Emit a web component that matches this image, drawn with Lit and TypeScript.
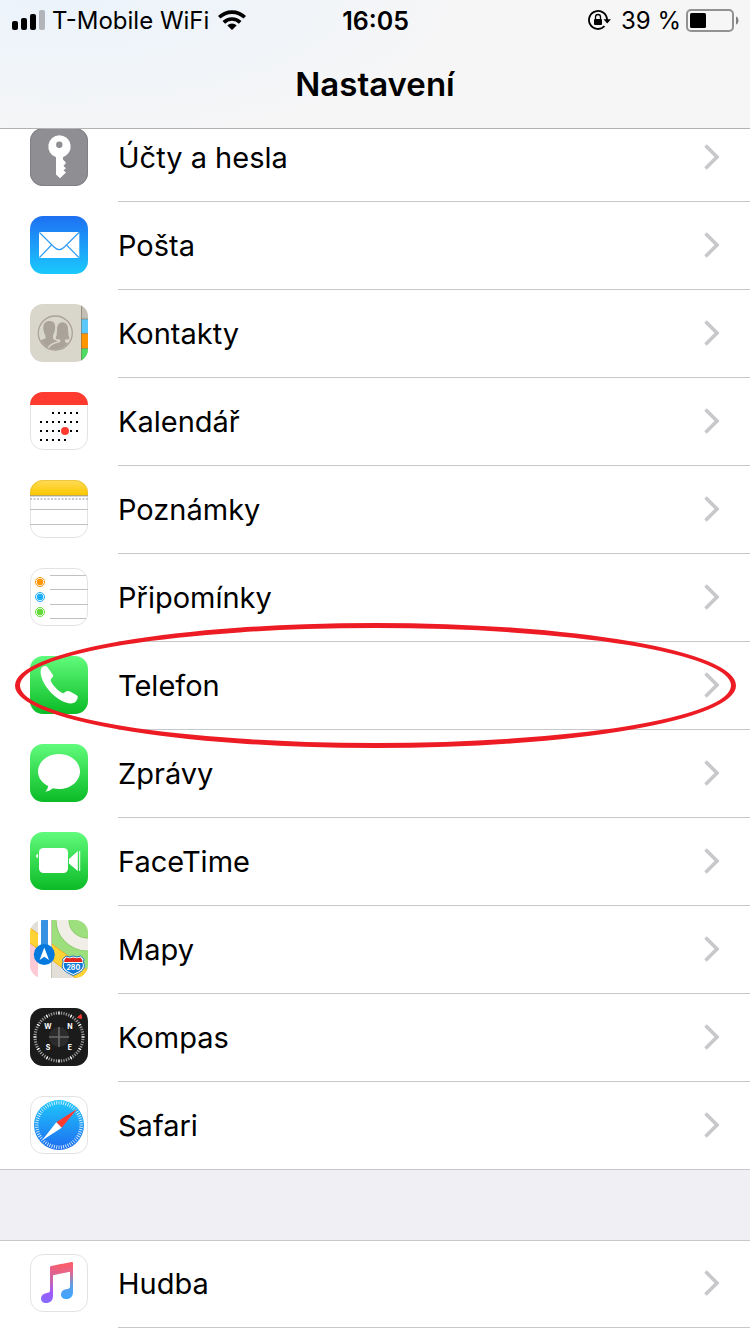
import { LitElement, html, svg, css, nothing, SVGTemplateResult } from "lit";
import { customElement, property } from "lit/decorators.js";

const outline = svg`<rect x="0.5" y="0.5" width="57" height="57" rx="12.5" fill="none" stroke="#e3e3e5"/>`;

const greenTile = svg`
  <defs><linearGradient id="green" x1="0" y1="0" x2="0" y2="1">
    <stop offset="0" stop-color="#61fb7c"/><stop offset="1" stop-color="#0abb26"/>
  </linearGradient></defs>
  <rect width="58" height="58" rx="13" fill="url(#green)"/>`;

const tileClip = svg`<clipPath id="tile"><rect width="58" height="58" rx="13"/></clipPath>`;

/** Tick marks around the centre of a 58px tile. */
function ticks(count: number, inner: number, outer: number, color: string, width: number) {
  return Array.from({ length: count }, (_, i) => svg`
    <line x1="29" x2="29" y1=${29 - outer} y2=${29 - inner} stroke=${color} stroke-width=${width}
      transform=${`rotate(${(i * 360) / count} 29 29)`}/>`);
}

function calendarDots() {
  const rows: Array<[number, number, number]> = [[20, 2, 6], [29, 0, 6], [38, 0, 6], [47, 0, 4]];
  return rows.map(([y, from, to]) =>
    Array.from({ length: to - from + 1 }, (_, i) => svg`
      <rect x=${10 + (from + i) * 6} y=${y} width="2" height="2" fill="#000"/>`));
}

const icons: Record<string, SVGTemplateResult> = {
  key: svg`
    <rect width="58" height="58" rx="13" fill="#8e8e93"/>
    <rect x="0.5" y="0.5" width="57" height="57" rx="12.5" fill="none" stroke="#808085"/>
    <path fill="#fff" fill-rule="evenodd" d="M29.3 7.2a11.3 11.3 0 0 1 3.7 22V31.5L36 34.8 33.5 38 36 40.3 33.5 42.2 36 44.6 30 50.2 26 46.5V29.2A11.3 11.3 0 0 1 29.3 7.2ZM29.3 13.6a3.2 3.2 0 1 0 0 6.4 3.2 3.2 0 0 0 0-6.4Z"/>`,
  mail: svg`
    <defs><linearGradient id="sky" x1="0" y1="0" x2="0" y2="1">
      <stop offset="0" stop-color="#1e70f2"/><stop offset="1" stop-color="#1ac9fd"/>
    </linearGradient></defs>
    <rect width="58" height="58" rx="13" fill="url(#sky)"/>
    <rect x="9" y="16" width="40.3" height="26" rx="1" fill="#fff"/>
    <g fill="none" stroke="#2f9df7" stroke-width="1.2">
      <path d="M9.5 16.5 24 31q5.2 5.2 10.4 0L49 16.5"/>
      <path d="M9.5 41.5 21.5 29M48.8 41.5 36.5 29"/>
    </g>`,
  contacts: svg`
    ${tileClip}
    <g clip-path="url(#tile)">
      <rect width="58" height="58" fill="#d9d6cc"/>
      <rect x="51" width="7" height="15" fill="#c2beb4"/>
      <rect x="51" y="15" width="7" height="14.5" fill="#5ac8fa"/>
      <rect x="51" y="29.5" width="7" height="15" fill="#ff9500"/>
      <rect x="51" y="44.5" width="7" height="14" fill="#4cd964"/>
      <path d="M51 15h7M51 29.5h7M51 44.5h7M51.5 0v58" stroke="#7d6a50" stroke-opacity=".55"/>
    </g>
    <clipPath id="people"><circle cx="25.3" cy="29" r="16.2"/></clipPath>
    <circle cx="25.3" cy="29" r="17" fill="none" stroke="#aaa39a" stroke-width="1.3"/>
    <g clip-path="url(#people)" fill="#aaa39a">
      <path d="M19.5 17c4 0 6 2.5 5.600 7-.1 4-1.300 5.500-2.100 7.500v3.500l5 2v12H6V38l9.500-3.500v-3c-1.200-2-2.200-4-2.200-7.500 0-4.500 2.200-7 6.200-7Z"/>
      <path stroke="#d9d6cc" stroke-width="1.500" d="M32.500 17.500c5 0 6.300 4 6.300 8.500 0 4 .4 6.500 1.500 9-1.300 1-3 1.200-4.600 1.200v1.300l8.300 3.500V50H18.500v-6c.8-3.500 5-5 11-6.500v-1.300c-1.700 0-3.500-.2-4.700-1.200 1.200-2.500 1.500-5 1.500-9 0-4.500 1.200-8.500 6.200-8.500Z"/>
    </g>`,
  calendar: svg`
    ${tileClip}
    <rect width="58" height="58" rx="13" fill="#fff"/>${outline}
    <g clip-path="url(#tile)"><rect width="58" height="13" fill="#ff3b30"/></g>
    ${calendarDots()}
    <circle cx="35" cy="39" r="4" fill="#ff3b30"/>`,
  notes: svg`
    ${tileClip}
    <defs><linearGradient id="gold" x1="0" y1="0" x2="0" y2="1">
      <stop offset="0" stop-color="#ffdc5a"/><stop offset="1" stop-color="#fdc800"/>
    </linearGradient></defs>
    <rect width="58" height="58" rx="13" fill="#fff"/>${outline}
    <g clip-path="url(#tile)">
      <rect width="58" height="15" fill="url(#gold)"/>
      <path d="M0 15.5h58" stroke="#b9a56a"/><path d="M0 16.5h58" stroke="#d8d8dc"/>
      <path d="M0 19h58" stroke="#c9c9cc" stroke-width="2" stroke-dasharray="2 1.5"/>
      <path d="M0 29.5h58M0 44.5h58" stroke="#c2c2c6"/>
    </g>
    <path d="M.5 15V13A12.5 12.5 0 0 1 13 .5H45A12.5 12.5 0 0 1 57.5 13V15" fill="none" stroke="#e5bd35" stroke-opacity=".7"/>`,
  reminders: svg`
    <rect width="58" height="58" rx="13" fill="#fff"/>${outline}
    <path d="M20 7.5h36M20 21.5h38M20 36.5h38M20 50.5h36" stroke="#c0c0c5"/>
    ${[["#ff9500", 14], ["#1badf8", 29], ["#63da38", 44]].map(([color, y]) => svg`
      <circle cx="10" cy=${y} r="4.5" fill="none" stroke=${color} stroke-width="1"/>
      <circle cx="10" cy=${y} r="3.2" fill=${color}/>`)}`,
  phone: svg`${greenTile}
    <path fill="#fff" d="M11.3 12.2C13 10.3 15.5 9.5 16.7 10.5c2 2 4.3 5.5 6.3 8.5 1 1.7-2.5 3.5-2.3 5.5.8 3.500 8 11.300 11.800 12.600 2 .6 3.500-2.600 5.700-2 3 1 6.300 2.700 9 4.600 1.500 1.300-.2 4.800-2 6.300-2.500 2-6 1.500-9.200.5C24.5 43.2 12 28.5 10.7 17.5c-.2-2 0-4 .6-5.300Z"/>`,
  messages: svg`${greenTile}
    <path fill="#fff" d="M29 10c11.6 0 21 7.8 21 17.500S40.600 45 29 45c-2.200 0-4.300-.2-6.200-.8-2.200 2-4.900 3.200-7.500 3.500 1.600-1.500 2.700-3.500 2.800-5.700C11.800 38.800 8 33.500 8 27.500 8 17.800 17.400 10 29 10Z"/>`,
  facetime: svg`${greenTile}
    <rect x="9" y="16" width="29" height="25" rx="4.5" fill="#fff"/>
    <path fill="#fff" d="M39 27 47.8 19V39L39 31.5ZM49.2 19H50.2V39H49.2ZM8 22v4c-2.5-.5-2.5-3.5 0-4Z"/>`,
  maps: svg`
    ${tileClip}
    <g clip-path="url(#tile)">
      <rect width="58" height="58" fill="#e2dfd8"/>
      <path d="M0 20 8 26V58H0Z" fill="#ffcad6"/>
      <path d="M21 0H58V50L21 24Z" fill="#9ddf7c"/>
      <circle cx="57" cy="0" r="24.5" fill="none" stroke="#84c864" stroke-width="13.5"/>
      <circle cx="57" cy="0" r="24.5" fill="none" stroke="#f1eee7" stroke-width="12"/>
      <path d="M-4 5-4 20 52 63 64 55Z" fill="#ffd335" stroke="#efb321" stroke-width="1"/>
      <path d="M8 0H21V58H8Z" fill="#fff"/><path d="M21.5 0V58" stroke="#c7c3b6"/>
      <path d="M11 0H18V36H11Z" fill="#3693e3"/>
    </g>
    <circle cx="14.3" cy="34.5" r="10.5" fill="#0579dd"/>
    <path d="M14.3 27.5 19 40 14.3 36.8 9.6 40Z" fill="#fff"/>
    <path d="M36 36q3.500 2 7.300 0 3.800 2 7.300 0l3.500 3.300q-1.500 2.200.2 5.200c1 6-5.500 8.500-11 11-5.500-2.500-12-5-11-11q1.700-3 .2-5.200Z" fill="#fff" stroke="#1275c9" stroke-width="1"/>
    <path d="M36.3 37.5q3.500 1.500 7 0 3.500 1.500 7 0l2 2.500v2H34.3v-2Z" fill="#e0271f"/>
    <path d="M34 43H52.6c1.500 6-3.300 8.300-9.300 11-6-2.700-10.800-5-9.300-11Z" fill="#0b79d6"/>
    <text x="43.3" y="49.5" text-anchor="middle" class="tiny">280</text>`,
  compass: svg`
    <rect width="58" height="58" rx="13" fill="#1b1b1b"/>
    ${ticks(60, 22.5, 25.5, "#9a9a9a", 1.2)}${ticks(12, 22.5, 25.5, "#fff", 1.2)}
    <circle cx="29" cy="29" r="10" fill="#2b2b2b"/>
    <path d="M29 19V39M19 29H39" stroke="#6a6a6a" stroke-width="1.6"/>
    <path d="M47.5 9.500 51 6.500 51.500 10.500Z" fill="#ff3b30" stroke="#ff3b30" stroke-linejoin="round"/>
    <g class="tiny"><text x="18" y="21" text-anchor="middle">W</text><text x="40" y="21" text-anchor="middle">N</text>
    <text x="18" y="42" text-anchor="middle">S</text><text x="40" y="42" text-anchor="middle">E</text></g>`,
  safari: svg`
    <defs><linearGradient id="azure" x1="0" y1="0" x2="0" y2="1">
      <stop offset="0" stop-color="#1ec8fa"/><stop offset="1" stop-color="#1e6cf1"/>
    </linearGradient></defs>
    <rect width="58" height="58" rx="13" fill="#fff"/>${outline}
    <circle cx="29" cy="29" r="25" fill="url(#azure)"/>
    ${ticks(60, 20.5, 24, "#d3ecff", 0.9)}
    <path d="M47 13 31.7 31.7 26.3 26.3Z" fill="#ff3b30"/>
    <path d="M12 44.5 26.3 26.3 31.7 31.7Z" fill="#fff"/>`,
  music: svg`
    <defs>
      <linearGradient id="tuneA" gradientUnits="userSpaceOnUse" x1="34" y1="12" x2="20" y2="48">
        <stop offset="0" stop-color="#fb5c68"/><stop offset=".5" stop-color="#c566b4"/><stop offset=".75" stop-color="#a058fb"/><stop offset="1" stop-color="#8a68ff"/>
      </linearGradient>
      <linearGradient id="tuneB" gradientUnits="userSpaceOnUse" x1="36" y1="10" x2="40" y2="42">
        <stop offset="0" stop-color="#fb5c68"/><stop offset=".25" stop-color="#e8648a"/><stop offset=".65" stop-color="#5f9ee0"/><stop offset="1" stop-color="#41a5ff"/>
      </linearGradient>
    </defs>
    <rect width="58" height="58" rx="13" fill="#fff"/>${outline}
    <path d="M20 13.5q0-1.200 1.200-1.500L32 9.8V19.300L23 21.200V42c0 4.500-3 7-6.800 7-3 0-5.200-1.800-5.200-4.600 0-3 2.300-4.700 5-5.200 2.500-.5 4-.7 4-2.700Z" fill="url(#tuneA)"/>
    <path d="M31.5 9.9 41.7 8Q43 7.8 43 9V38c0 4.700-2.800 7-6.500 7-3 0-5.500-1.700-5.500-4.600 0-3 2.300-4.600 5-5.100 2.500-.5 4-.6 4-2.800V17.800L31.500 19.400Z" fill="url(#tuneB)"/>`,
};

interface Entry {
  icon: string;
  label: string;
  marked?: boolean;
}

const groups: Entry[][] = [
  [
    { icon: "key", label: "Účty a hesla" },
    { icon: "mail", label: "Pošta" },
    { icon: "contacts", label: "Kontakty" },
    { icon: "calendar", label: "Kalendář" },
    { icon: "notes", label: "Poznámky" },
    { icon: "reminders", label: "Připomínky" },
    { icon: "phone", label: "Telefon", marked: true },
    { icon: "messages", label: "Zprávy" },
    { icon: "facetime", label: "FaceTime" },
    { icon: "maps", label: "Mapy" },
    { icon: "compass", label: "Kompas" },
    { icon: "safari", label: "Safari" },
  ],
  [{ icon: "music", label: "Hudba" }],
];

@customElement("status-bar")
class StatusBar extends LitElement {
  static styles = css`
    :host {
      display: grid;
      grid-template-columns: 1fr auto 1fr;
      align-items: center;
      height: 40px;
      padding: 0 11px 0 12px;
      font-size: 24px;
      line-height: 40px;
      white-space: nowrap;
    }
    svg { display: block; flex: none; }
    span { padding-top: 2px; line-height: 38px; }
    .side { display: flex; align-items: center; gap: 7px; }
    .end { justify-content: flex-end; gap: 5px; }
    .wifi { margin-left: 2px; }
    .lock { margin-right: 4px; }
    .time { font-size: 25px; font-weight: 600; }
  `;

  render() {
    return html`
      <div class="side">
        <svg width="33" height="20" viewBox="0 0 33 20" role="img" aria-label="Signál">
          <rect y="11" width="6" height="9" rx="2"/>
          <rect x="9" y="8" width="6" height="12" rx="2"/>
          <rect x="18" y="4" width="6" height="16" rx="2"/>
          <rect x="27" width="6" height="20" rx="2" fill="#b1b5b9"/>
        </svg>
        <span>T-Mobile WiFi</span>
        <svg class="wifi" width="28" height="20" viewBox="0 0 28 20" role="img" aria-label="Wi-Fi">
          <g fill="none" stroke="#000" stroke-width="3.7">
            <path d="M1.2 7.3a18.3 18.3 0 0 1 25.6 0"/>
            <path d="M5.8 12.300a11.800 11.800 0 0 1 16.400 0"/>
          </g>
          <path d="M14 20 9.3 15.500a6.700 6.700 0 0 1 9.400 0Z"/>
        </svg>
      </div>
      <span class="time">16:05</span>
      <div class="side end">
        <svg class="lock" width="24" height="20" viewBox="0 0 24 20" role="img" aria-label="Zámek otočení">
          <path d="M16.5 16.2A9 9 0 1 1 19 10" fill="none" stroke="#000" stroke-width="1.8"/>
          <path d="M15.5 9.3H23L19.2 13.5Z"/>
          <rect x="6" y="9" width="8" height="6" rx="1"/>
          <path d="M7.5 9V7a2.5 2.5 0 0 1 5 0V9" fill="none" stroke="#000" stroke-width="1.3"/>
        </svg>
        <span>39 %</span>
        <svg width="53" height="23" viewBox="0 0 53 23" role="img" aria-label="Baterie">
          <rect x="1" y="1" width="46" height="21" rx="4" fill="none" stroke="#929292" stroke-width="2"/>
          <rect x="4" y="4" width="16" height="15" rx="1.5"/>
          <path d="M50 7.5c3.3 1 3.3 7 0 8Z" fill="#808080"/>
        </svg>
      </div>`;
  }
}

@customElement("settings-row")
class SettingsRow extends LitElement {
  @property() icon = "";
  @property() label = "";
  @property({ type: Boolean }) marked = false;

  static styles = css`
    :host { display: block; position: relative; }
    .row {
      display: flex;
      gap: 30px;
      padding-left: 30px;
      color: #000;
      text-decoration: none;
    }
    .icon { display: block; flex: none; padding: 14px 0 16px; }
    .tiny { font: 700 7px "Inter", sans-serif; fill: #fff; }
    .body {
      flex: 1;
      display: flex;
      align-items: center;
      justify-content: space-between;
      padding: 0 30px 1px 0;
      border-bottom: 1px solid #c8c7cc;
    }
    :host([last]) .body { border-color: transparent; }
    .label { padding-top: 2px; font-size: 29px; line-height: 40px; }
    .chevron { display: block; flex: none; }
    .mark {
      position: absolute;
      inset: -19px 14px -18px 15px;
      border: 5px solid #ed1c24;
      border-radius: 50%;
      z-index: 1;
      pointer-events: none;
    }
  `;

  render() {
    return html`
      <a class="row" href="#">
        <svg class="icon" width="58" height="58" viewBox="0 0 58 58" aria-hidden="true">${icons[this.icon]}</svg>
        <span class="body">
          <span class="label">${this.label}</span>
          <svg class="chevron" width="16" height="26" viewBox="0 0 16 26" aria-hidden="true">
            <path d="M1.5 1.5 13 13 1.5 24.5" fill="none" stroke="#c7c7cc" stroke-width="3.6"/>
          </svg>
        </span>
      </a>
      ${this.marked ? html`<div class="mark"></div>` : nothing}`;
  }
}

@customElement("app-root")
class AppRoot extends LitElement {
  static styles = css`
    :host {
      display: block;
      min-height: 100vh;
      background: #fff;
      color: #000;
      font-family: "Inter", "Liberation Sans", sans-serif;
    }
    .header {
      position: relative;
      z-index: 2;
      border-bottom: 1px solid #b2b2b2;
      background: radial-gradient(ellipse 400px 140px at 60px 0, #ebf3fb, #f6f6f7);
    }
    .title {
      margin: 0;
      padding: 22px 0;
      font-size: 33px;
      line-height: 44px;
      font-weight: 600;
      text-align: center;
    }
    .content { margin-top: -15px; background: #efeff4; }
    .group {
      list-style: none;
      margin: 0;
      padding: 0;
      background: #fff;
      box-shadow: inset 0 1px #c8c7cc, inset 0 -1px #c8c7cc;
    }
    .group + .group { margin-top: 70px; box-shadow: inset 0 1px #c8c7cc; }
  `;

  render() {
    return html`
      <header class="header">
        <status-bar></status-bar>
        <h1 class="title">Nastavení</h1>
      </header>
      <main class="content">
        ${groups.map((group, g) => html`
          <ul class="group">
            ${group.map((entry, i) => html`
              <li>
                <settings-row
                  .icon=${entry.icon}
                  .label=${entry.label}
                  .marked=${!!entry.marked}
                  ?last=${g === 0 && i === group.length - 1}
                ></settings-row>
              </li>`)}
          </ul>`)}
      </main>`;
  }
}
